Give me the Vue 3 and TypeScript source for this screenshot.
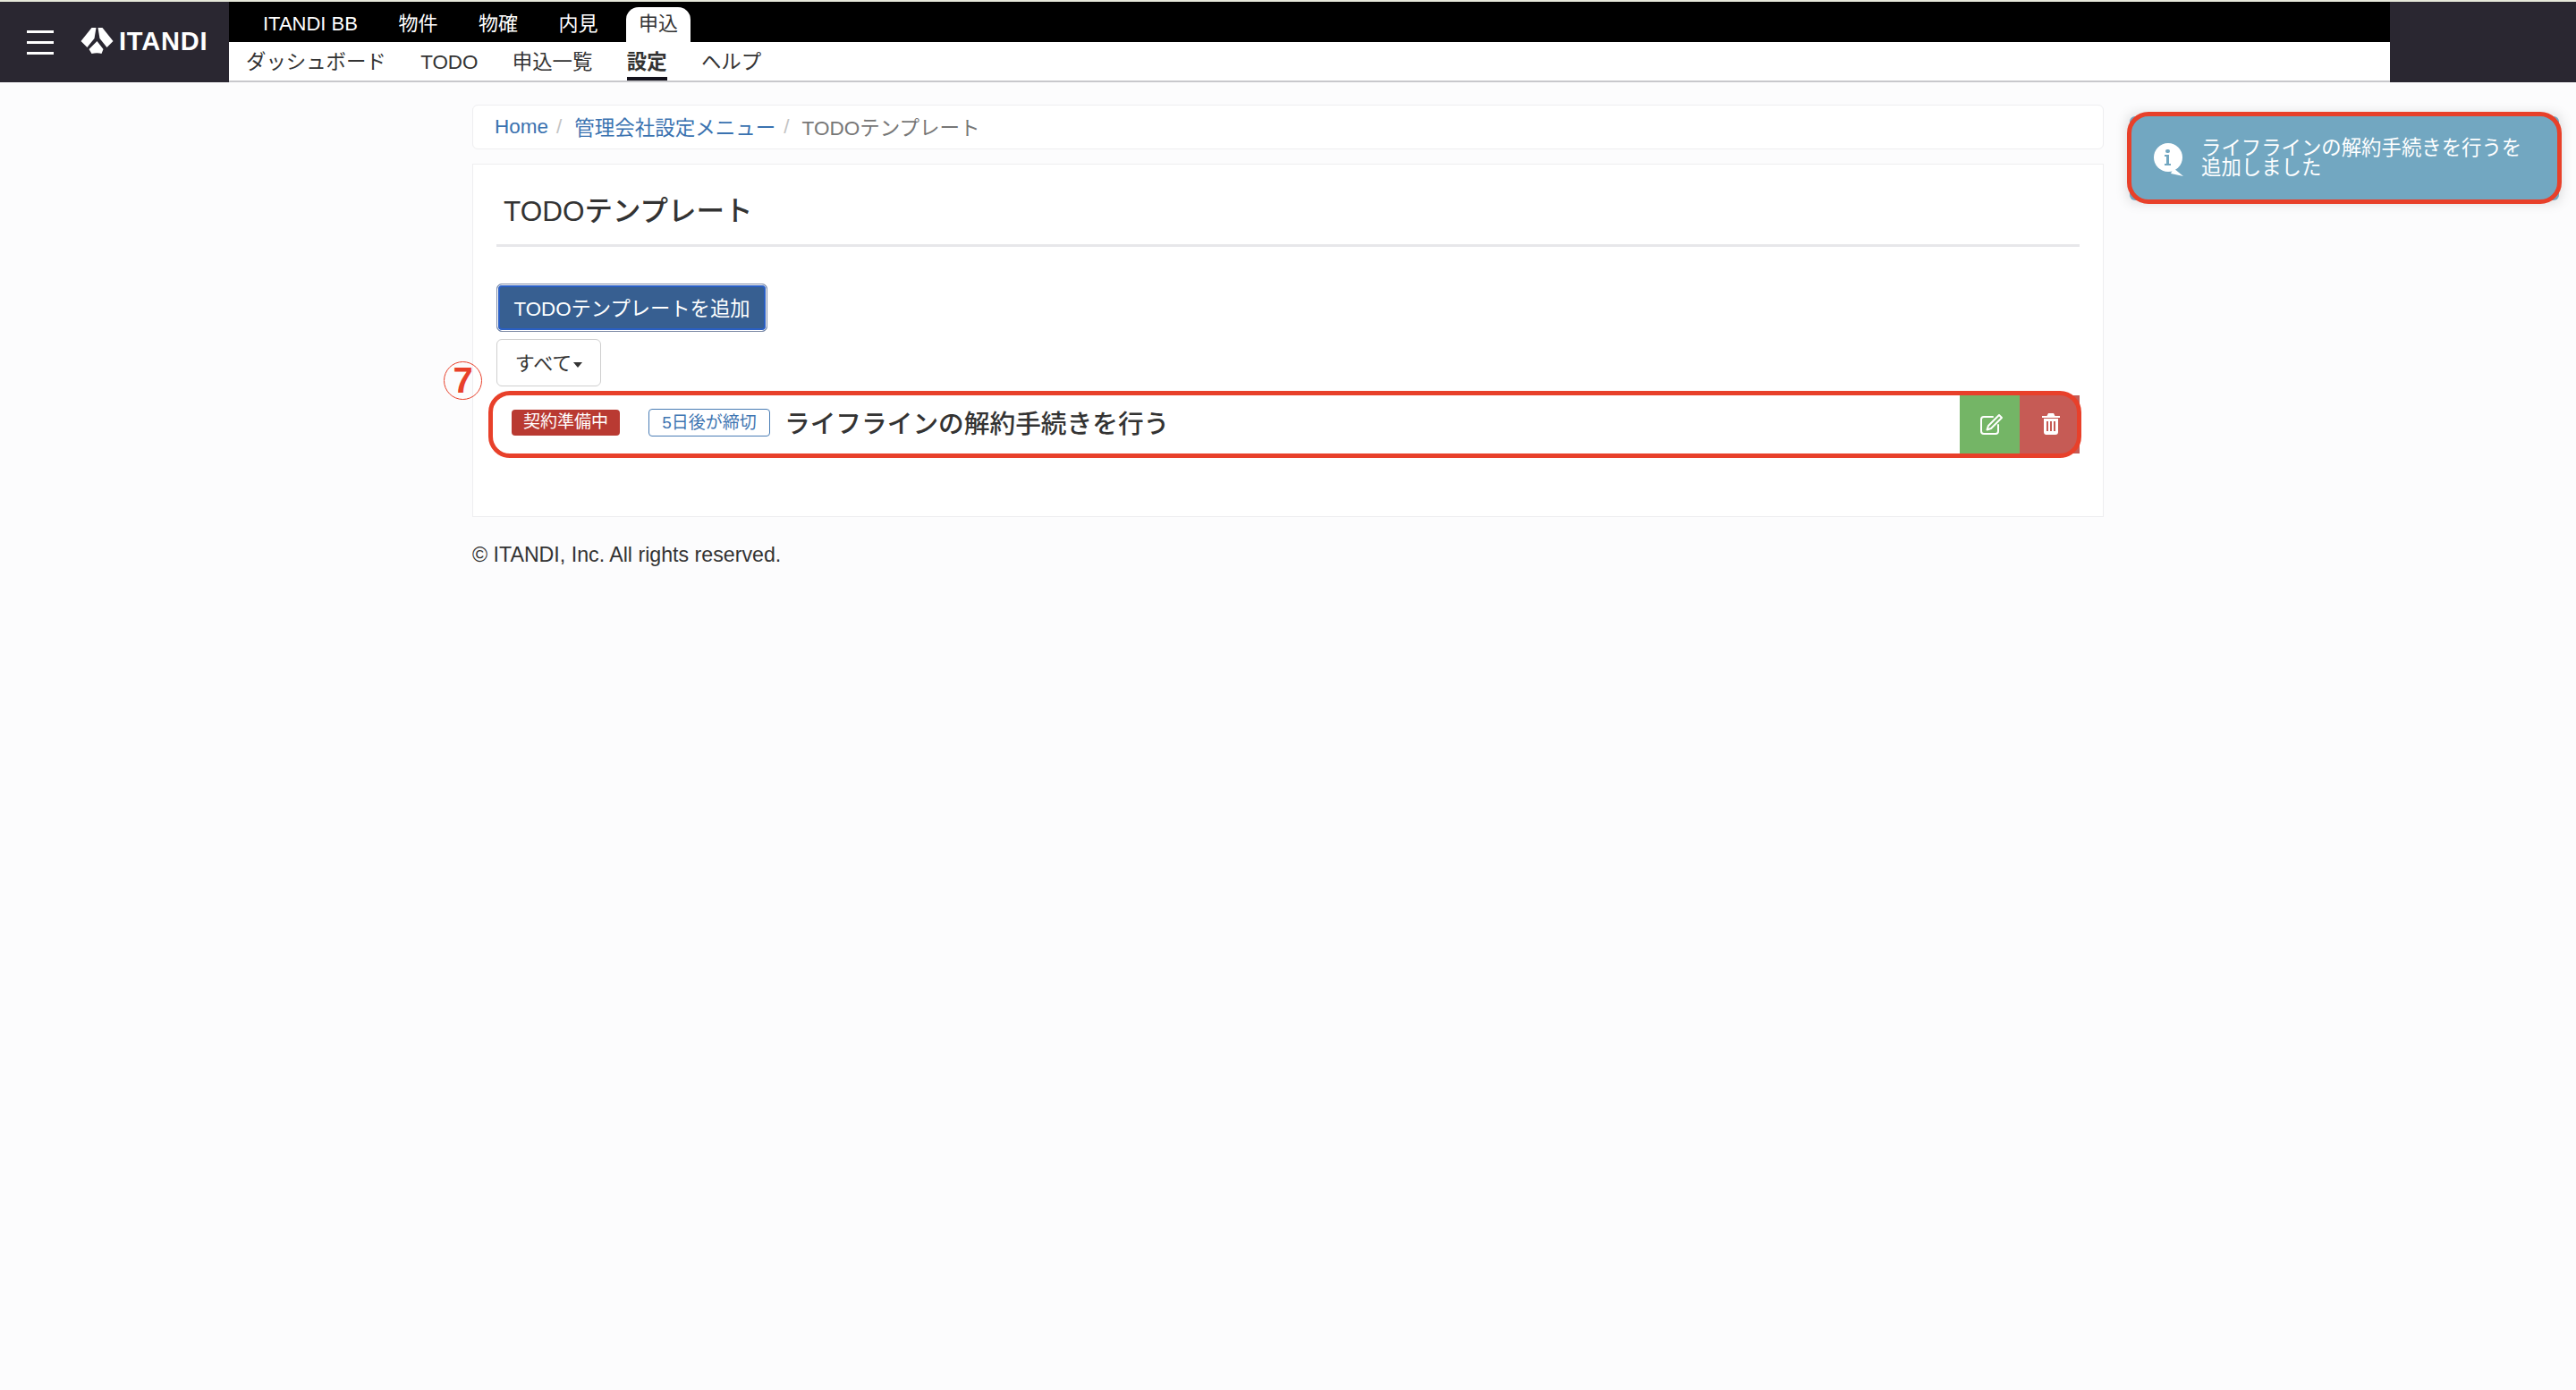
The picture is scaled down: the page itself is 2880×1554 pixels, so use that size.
<script setup lang="ts">
const tabs = ['ITANDI BB', '物件', '物確', '内見', '申込']
const subMenus = ['ダッシュボード', 'TODO', '申込一覧', '設定', 'ヘルプ']
const activeTab = '申込'
const activeSub = '設定'
</script>

<template>
  <div class="page">
    <header class="header">
      <div class="brand">
        <span class="burger"><i /><i /><i /></span>
        <svg class="logo-mark" viewBox="0 0 36 30" width="37" height="30" fill="#fff">
          <path d="M12 0h5l-2 12-6.500 8-1.500 2L0 15z" />
          <path d="M19 0h5l12 15-7 7-8-10z" />
          <path d="M18 15l7 9-2 5c-3-1-7-1-11 0l-3-5z" />
        </svg>
        <span class="logo-text">ITANDI</span>
      </div>
      <div class="nav">
        <div class="tabs">
          <span v-for="t in tabs" :key="t" class="tab" :class="{ active: t === activeTab }">{{ t }}</span>
        </div>
        <div class="subnav">
          <span v-for="s in subMenus" :key="s" class="sub" :class="{ active: s === activeSub }">{{ s }}</span>
        </div>
      </div>
      <div class="header-end" />
    </header>

    <main class="content">
      <nav class="breadcrumb">
        <a class="crumb-link">Home</a>
        <span class="sep">/</span>
        <a class="crumb-link ja">管理会社設定メニュー</a>
        <span class="sep">/</span>
        <span class="crumb-current ja">TODOテンプレート</span>
      </nav>

      <section class="card">
        <h1 class="title">TODOテンプレート</h1>
        <button class="btn-add">TODOテンプレートを追加</button>
        <button class="btn-filter">すべて<span class="caret" /></button>

        <div class="todo-row">
          <span class="status">契約準備中</span>
          <span class="deadline">5日後が締切</span>
          <span class="todo-name">ライフラインの解約手続きを行う</span>
          <div class="actions">
            <span class="act edit">
              <svg width="26" height="24" viewBox="0 0 26 24" fill="none" stroke="#fff" stroke-width="2" stroke-linejoin="round" stroke-linecap="round">
                <path d="M14 4H4a3 3 0 0 0-3 3v13a3 3 0 0 0 3 3h13a3 3 0 0 0 3-3v-7" />
                <path d="M21 2l3 3-12 12-4.500 1.500L9 14z" />
              </svg>
            </span>
            <span class="act del">
              <svg width="20" height="24" viewBox="0 0 20 24" fill="#fff">
                <path d="M7 0h6l1.500 3H20v2H0V3h5.500z" />
                <path fill-rule="evenodd" d="M2 6h16v15a3 3 0 0 1-3 3H5a3 3 0 0 1-3-3zm3 3v11h2V9zm4 0v11h2V9zm4 0v11h2V9z" />
              </svg>
            </span>
          </div>
          <!-- 赤枠の注釈 -->
          <div class="mark-row" />
          <span class="mark-num">7</span>
        </div>
      </section>

      <footer class="footer">© ITANDI, Inc. All rights reserved.</footer>
    </main>

    <div class="toast">
      <svg class="toast-icon" width="34" height="38" viewBox="0 0 34 38">
        <circle cx="16" cy="16" r="16" fill="#fff" />
        <path d="M22 28l11 9-14-3z" fill="#fff" />
        <rect x="13" y="7" width="5" height="4" rx="2" fill="#72a7c1" />
        <path d="M12 13h5v10h2v2h-7v-2h2v-8h-2z" fill="#72a7c1" />
      </svg>
      <p class="toast-text">ライフラインの解約手続きを行うを<br />追加しました</p>
      <div class="mark-toast" />
    </div>
  </div>
</template>

<style scoped>
.page {
  position: relative;
  min-height: 1554px;
  padding-top: 2px;
  box-sizing: border-box;
  font-family: "Liberation Sans", "Noto Sans CJK JP", sans-serif;
  color: #333;
}

/* ── ヘッダー ── */
.header {
  display: flex;
  height: 90px;
}

.brand {
  width: 256px;
  flex-shrink: 0;
  display: flex;
  align-items: center;
  background: #2a2731;
  padding-left: 30px;
  box-sizing: border-box;
}

.burger {
  display: flex;
  flex-direction: column;
  gap: 9px;
  width: 30px;
}

.burger i {
  display: block;
  height: 3px;
  background: #fff;
}

.logo-mark {
  margin-left: 30px;
  margin-top: -2px;
}

.logo-text {
  margin-left: 6px;
  margin-top: -2px;
  color: #fff;
  font-size: 29px;
  font-weight: 700;
  letter-spacing: 0.8px;
}

.nav {
  width: 2416px;
  flex-shrink: 0;
  display: flex;
  flex-direction: column;
}

.tabs {
  height: 45px;
  background: #000;
  display: flex;
  align-items: flex-end;
  padding-left: 38px;
  gap: 45.500px;
}

.tab {
  height: 39px;
  line-height: 38px;
  color: #fff;
  font-size: 22px;
}

.tab.active {
  color: #333;
  background: #fff;
  padding: 0 14px;
  margin-left: -14px;
  border-radius: 14px 14px 0 0;
}

.subnav {
  flex: 1;
  background: #fff;
  border-bottom: 2px solid #c8c8cc;
  display: flex;
  padding-left: 19px;
  gap: 38.400px;
}

.sub {
  font-size: 22.4px;
  line-height: 45px;
  height: 43px;
  box-sizing: border-box;
  color: #333;
}

.sub.active {
  font-weight: 700;
  border-bottom: 4px solid #14121c;
}

.header-end {
  flex: 1;
  background: #2a2731;
}

/* ── 本文 ── */
.content {
  width: 1824px;
  margin-left: 528px;
  padding-top: 25px;
}

.breadcrumb {
  height: 50px;
  box-sizing: border-box;
  background: #fff;
  border: 1px solid #eeeef0;
  border-radius: 6px;
  display: flex;
  align-items: center;
  padding-left: 24px;
  font-size: 22.5px;
}

.crumb-link {
  color: #3a72b0;
}

.ja {
  margin-top: -2px;
}

.sep {
  color: #c4c4c4;
  margin: 0 14px 0 9px;
}

.crumb-current {
  color: #777;
}

.card {
  margin-top: 16px;
  height: 395px;
  box-sizing: border-box;
  background: #fff;
  border: 1px solid #eeeef0;
  padding: 0 26px 0 26px;
  display: flex;
  flex-direction: column;
  align-items: flex-start;
}

.title {
  align-self: stretch;
  margin: 0 0 41px;
  height: 92px;
  box-sizing: border-box;
  padding: 29px 0 0 8px;
  border-bottom: 3px solid #e7e7ea;
  font-size: 31.5px;
  line-height: 46px;
  font-weight: 500;
  color: #333;
}

.btn-add {
  width: 303px;
  height: 54px;
  box-sizing: border-box;
  padding: 0 0 2px;
  font: inherit;
  font-size: 22.3px;
  color: #fff;
  background: #375f91;
  border: 1px solid #7d8aa5;
  border-radius: 6px;
  box-shadow: inset 0 0 0 1px #fff, inset 0 0 0 3px #2a5fc4;
}

.btn-filter {
  margin-top: 8px;
  width: 117px;
  height: 53px;
  box-sizing: border-box;
  padding: 0 0 3px;
  font: inherit;
  font-size: 22px;
  color: #333;
  background: #fff;
  border: 1px solid #cfcfcf;
  border-radius: 6px;
}

.caret {
  display: inline-block;
  margin-left: 2px;
  vertical-align: middle;
  border-top: 6px solid #333;
  border-left: 5px solid transparent;
  border-right: 5px solid transparent;
}

.todo-row {
  position: relative;
  align-self: stretch;
  margin-top: 10px;
  height: 65px;
  display: flex;
  align-items: center;
  padding-left: 17px;
}

.status {
  width: 121px;
  height: 29px;
  margin-top: -4px;
  line-height: 28px;
  text-align: center;
  font-size: 19px;
  color: #fff;
  background: #b93a32;
  border-radius: 4px;
}

.deadline {
  margin-left: 32px;
  margin-top: -4px;
  width: 136px;
  height: 31px;
  box-sizing: border-box;
  line-height: 29px;
  text-align: center;
  font-size: 19px;
  color: #3f76b2;
  border: 1px solid #4a7db5;
  border-radius: 4px;
}

.todo-name {
  margin-left: 16px;
  margin-top: -6px;
  font-size: 28.7px;
  font-weight: 500;
  color: #333;
}

.actions {
  margin-left: auto;
  display: flex;
  align-self: stretch;
}

.act {
  width: 67px;
  display: flex;
  align-items: center;
  justify-content: center;
}

.edit {
  background: #74b566;
}

.edit svg {
  margin-left: 5px;
  margin-top: -1px;
}

.del {
  background: #c65b55;
}

.del svg {
  margin-left: 2px;
  margin-top: -1px;
}

.mark-row {
  position: absolute;
  left: -9px;
  right: -2px;
  top: -5px;
  bottom: -5px;
  border: 5px solid #e8402a;
  border-radius: 24px;
}

.mark-num {
  position: absolute;
  left: -59px;
  top: -38px;
  width: 43px;
  height: 43px;
  box-sizing: border-box;
  border: 1.5px solid #e8402a;
  border-radius: 50%;
  color: #e8402a;
  font-size: 40px;
  line-height: 40px;
  font-weight: 700;
  text-align: center;
}

.footer {
  margin-top: 29px;
  font-size: 23.2px;
  line-height: 26px;
  color: #333;
}

/* ── トースト ── */
.toast {
  position: absolute;
  left: 2381px;
  top: 130px;
  width: 480px;
  height: 94px;
  box-sizing: border-box;
  background: #72a7c1;
  border-radius: 6px;
  box-shadow: 0 0 16px rgba(0, 0, 0, 0.2);
  display: flex;
  align-items: center;
  padding-left: 27px;
}

.toast-icon {
  flex-shrink: 0;
  margin-top: 4px;
}

.toast-text {
  margin: 0 0 0 19px;
  color: #fff;
  font-size: 22.4px;
  line-height: 22px;
  white-space: nowrap;
}

.mark-toast {
  position: absolute;
  left: -3px;
  right: -3px;
  top: -5px;
  bottom: -4px;
  border: 5px solid #e8402a;
  border-radius: 24px;
}
</style>

<style>
html, body {
  background: #fcfcfd;
}
body {
  box-shadow: inset 0 2px 0 #e6e8da;
}
</style>
